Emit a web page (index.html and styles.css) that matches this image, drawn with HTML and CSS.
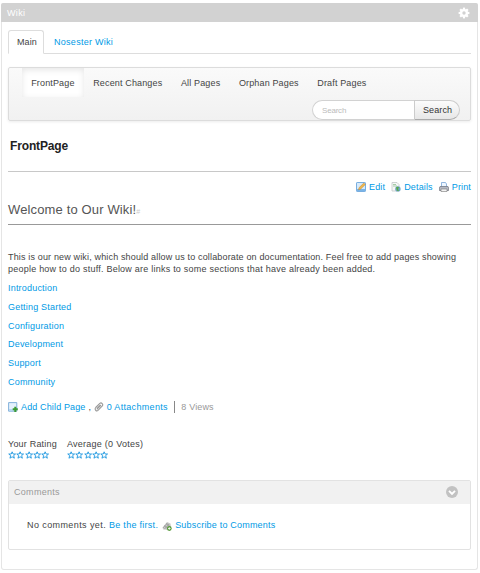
FILE: index.html
```html
<!DOCTYPE html>
<html lang="en">
<head>
<meta charset="utf-8">
<title>Wiki</title>
<link rel="stylesheet" href="styles.css">
</head>
<body>
<svg class="defs" aria-hidden="true">
  <symbol id="star" viewBox="0 0 8 8"><path d="M4 .8 4.9 3H7.4L5.5 4.6 6.2 7.2 4 5.8 1.8 7.2 2.5 4.6.6 3H3.1Z" fill="#fff" stroke="#1b96e0" stroke-width=".9"/></symbol>
</svg>
<section class="portlet">
  <header class="topper"><span>Wiki</span>
    <svg class="gear" viewBox="0 0 12 12"><g fill="#fff"><circle cx="6" cy="6" r="4.1"/><path d="M4.9.6h2.2v10.8H4.900z"/><path d="M4.9.6h2.2v10.8H4.900z" transform="rotate(45 6 6)"/><path d="M4.9.6h2.2v10.8H4.900z" transform="rotate(90 6 6)"/><path d="M4.9.6h2.2v10.8H4.900z" transform="rotate(135 6 6)"/></g><circle cx="6" cy="6" r="1.7" fill="#d2d2d2"/></svg>
  </header>
  <div class="content">
    <nav class="tabs"><a class="tab selected">Main</a><a class="tab">Nosester Wiki</a></nav>
    <div class="navbar">
      <nav class="pages"><a class="active">FrontPage</a><a>Recent Changes</a><a>All Pages</a><a>Orphan Pages</a><a>Draft Pages</a></nav>
      <form class="search"><span class="field">Search</span><span class="button">Search</span></form>
    </div>
    <h1>FrontPage</h1>
    <div class="actions">
      <a><svg class="icon" viewBox="0 0 10 10"><rect x=".5" y=".5" width="9" height="9" rx=".6" fill="#d7eafa" stroke="#78aee0"/><path d="M1 7h8v2H1z" fill="#79b4e8"/><path d="m2.500 7.800.5-2.100L7.800 1l1.500 1.500-4.800 4.700z" fill="#f2b84b" stroke="#b6843c" stroke-width=".5"/></svg>Edit</a>
      <a><svg class="icon" viewBox="0 0 10 10"><path d="M1 .5h5l2 2V9H1z" fill="#f7f7f7" stroke="#c2c8c8" stroke-width=".8"/><path d="M2 2.500h3M2 4h4" stroke="#8fbf93" stroke-width=".8"/><circle cx="6.900" cy="6.900" r="2.700" fill="#6fa5c6"/><path d="M5 5.500q2-1.600 3 0L7 7l1 2-2-.3-.4-1.700z" fill="#57a944"/></svg>Details</a>
      <a><svg class="icon" viewBox="0 0 10 10"><path d="M2.500.5h4l1 1.500v3h-5z" fill="#eef6ff" stroke="#7aa5d5" stroke-width=".8"/><path d="M1 4.500h8l.6 1.500v2.500H.4V6z" fill="#b5b8c2" stroke="#70737d" stroke-width=".7"/><path d="M2 7h6v2.500H2z" fill="#f3f3f3" stroke="#777" stroke-width=".6"/></svg>Print</a>
    </div>
    <h2>Welcome to Our Wiki!<span class="hash">#</span></h2>
    <p class="intro"><span class="line1">This is our new wiki, which should allow us to collaborate on documentation. Feel free to add pages showing</span><br><span class="line2">people how to do stuff. Below are links to some sections that have already been added.</span></p>
    <div class="links"><a>Introduction</a><a>Getting Started</a><a>Configuration</a><a>Development</a><a>Support</a><a>Community</a></div>
    <div class="meta">
      <svg class="icon" viewBox="0 0 10 10"><path d="M.6.6h8.200v8.600H.6z" fill="#e4f1fc" stroke="#77a9d6" stroke-width=".9"/><path d="M1 7h7v2H1z" fill="#b6d5ef"/><path d="M6.300 4.800h2v1.500h1.500v2H8.300v1.600h-2V8.300H4.700v-2h1.600z" fill="#3b9a32"/></svg><a class="child">Add Child Page</a><span class="comma">,</span>
      <svg class="icon clip" viewBox="0 0 10 10"><path d="M2.800 7.300 7 3.100M1.700 5.500 5.800 1.400c1.700-1.300 3.800.8 2.500 2.500L4 8.400C2.400 9.800.2 7.600 1.700 5.500M3 6.500 6.500 3" fill="none" stroke="#999" stroke-width="1.100"/></svg><a class="attachments">0 Attachments</a><span class="views">8 Views</span>
    </div>
    <div class="ratings">
      <div class="rating"><span>Your Rating</span><div class="stars"><svg><use href="#star"/></svg><svg><use href="#star"/></svg><svg><use href="#star"/></svg><svg><use href="#star"/></svg><svg><use href="#star"/></svg></div></div>
      <div class="rating average"><span>Average (0 Votes)</span><div class="stars"><svg><use href="#star"/></svg><svg><use href="#star"/></svg><svg><use href="#star"/></svg><svg><use href="#star"/></svg><svg><use href="#star"/></svg></div></div>
    </div>
    <section class="comments">
      <header><span>Comments</span><svg viewBox="0 0 12 12"><circle cx="6" cy="6" r="6" fill="#c2c2c2"/><path d="m3 4.800 3 3 3-3" fill="none" stroke="#fff" stroke-width="1.900"/></svg></header>
      <div class="body"><span class="empty">No comments yet. </span><a class="first">Be the first.</a><svg class="icon" viewBox="0 0 10 10"><path d="M.5 6.500 5 1l3.500 1.500L9 6 5 9 1 8z" fill="#c8c8c8"/><path d="M1 7 5.500 2M2 8.500 7 3M2 4.500l4 3M4 2.500l4 3" stroke="#999" stroke-width=".7"/><circle cx="7.300" cy="7.500" r="2.400" fill="#5a9b3f"/><path d="M7.300 6.200v2.600M6 7.500h2.600" stroke="#fff" stroke-width=".8"/></svg><a>Subscribe to Comments</a></div>
    </section>
  </div>
</section>
</body>
</html>
```
FILE: styles.css
```css
* { box-sizing: border-box; }
body { margin: 0; background: #fff; color: #444; font: 9px/12px "Liberation Sans", Arial, sans-serif; letter-spacing: .2px; }
.defs { position: absolute; width: 0; height: 0; }
a { color: #009ae5; white-space: nowrap; }
.portlet { width: 477px; height: 567px; margin: 3px 0 0 1px; border: 1px solid #e5e5e5; border-top: 0; border-radius: 3px; }
.topper { display: flex; justify-content: space-between; align-items: center; height: 19px; margin: 0 -1px; padding: 0 8px 0 6px; background: #d2d2d2; border-radius: 2px 2px 0 0; color: #fff; letter-spacing: .35px; }
.gear { width: 12px; height: 12px; }
.content { padding: 8px 6px 0; }
.tabs { display: flex; height: 24px; border-bottom: 1px solid #ddd; }
.tab { height: 24px; padding: 6px 10px 0; letter-spacing: .28px; }
.tab.selected { width: 36px; padding: 5px 0 0 8px; border: 1px solid #ddd; border-bottom-color: #fff; border-radius: 3px 3px 0 0; background: #fff; color: #444; letter-spacing: .1px; }
.navbar { height: 54px; margin-top: 13px; padding-left: 13px; border: 1px solid #dcdcdc; border-radius: 2px; background: linear-gradient(#fafafa, #f1f1f1); box-shadow: 0 1px 3px rgba(0,0,0,.08); }
.pages { display: flex; letter-spacing: .15px; }
.pages a { height: 29px; padding: 9px 9.400px 0 9.200px; color: #444; }
.pages .active { width: 62px; background: #fff; box-shadow: inset 0 2px 6px rgba(0,0,0,.1); }
.search { display: flex; width: 148px; height: 20px; margin: 3px 10px 0 auto; }
.field { width: 102px; padding: 4px 0 0 9px; border: 1px solid #d2d2d2; border-right: 0; border-radius: 10px 0 0 10px; background: #fff; color: #bbb; font-size: 8px; line-height: 11px; letter-spacing: -.2px; }
.button { width: 46px; padding: 3px 0 0 8px; border: 1px solid #ccc; border-bottom-color: #aaa; border-radius: 0 10px 10px 0; background: linear-gradient(#fcfcfc, #e7e7e7); color: #333; letter-spacing: .1px; }
h1 { height: 51px; margin: 0; padding: 17px 0 0 2px; border-bottom: 1px solid #c8c8c8; color: #222; font-size: 12px; line-height: 16px; letter-spacing: -.15px; }
.actions { display: flex; justify-content: flex-end; gap: 6px; height: 28px; padding-top: 9px; letter-spacing: .15px; }
.actions a { display: flex; }
.icon { flex: none; width: 10px; height: 10px; margin: 1px 3px 0 0; }
h2 { height: 25px; margin: 0; padding-top: 2px; border-bottom: 1px solid #999; color: #555; font-size: 13px; font-weight: 400; line-height: 16px; letter-spacing: .14px; }
.hash { color: #ccc; font-size: 7px; }
.intro { margin: 26px 0 0; white-space: nowrap; }
.line1 { letter-spacing: .158px; }
.line2 { letter-spacing: .23px; }
.links { display: grid; grid-auto-rows: 18.750px; margin-top: 7px; }
.meta { display: flex; margin-top: 6px; letter-spacing: .14px; }
.comma { margin: 0 3px; }
.clip { margin-right: 2.500px; }
.attachments { letter-spacing: .32px; }
.views { margin-left: 6.500px; padding-left: 6px; border-left: 1px solid #888; color: #999; }
.ratings { display: flex; gap: 10px; margin-top: 25px; }
.average { letter-spacing: .26px; }
.stars { display: flex; padding-top: 1px; }
.stars svg { width: 8.300px; height: 8px; }
.comments { height: 70px; margin-top: 21px; border: 1px solid #e2e2e2; border-radius: 2px; }
.comments header { display: flex; align-items: center; justify-content: space-between; height: 23px; padding: 0 12px 0 5px; background: #f1f1f1; color: #999; letter-spacing: .3px; }
.comments header svg { width: 12px; height: 12px; }
.comments .body { display: flex; padding: 15px 0 0 18px; white-space: pre; }
.empty { letter-spacing: .41px; }
.first { letter-spacing: .28px; }
.body .icon { margin: 2px 3px 0 4px; }
```
